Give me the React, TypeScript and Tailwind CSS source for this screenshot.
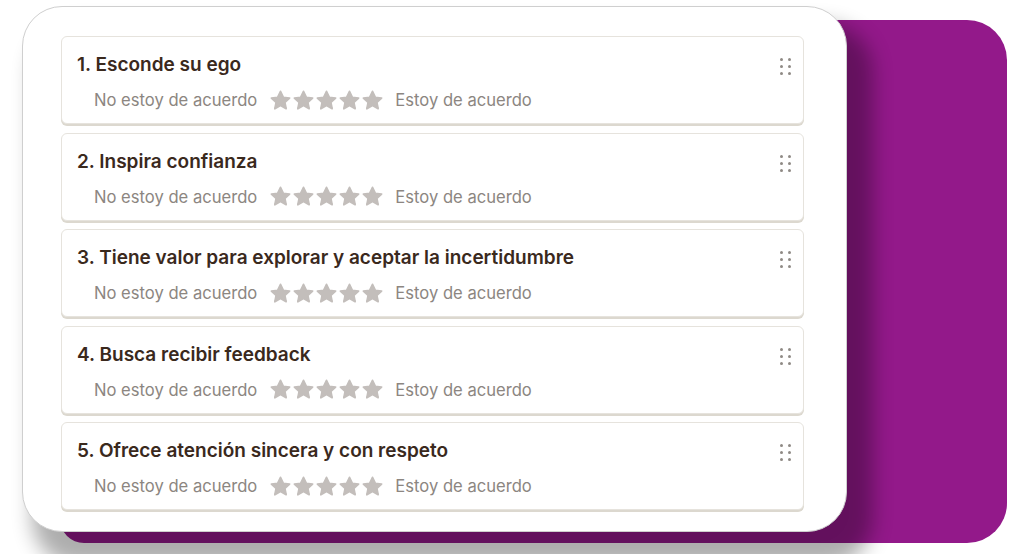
const questions = [
  "1. Esconde su ego",
  "2. Inspira confianza",
  "3. Tiene valor para explorar y aceptar la incertidumbre",
  "4. Busca recibir feedback",
  "5. Ofrece atención sincera y con respeto",
]

function Star() {
  return (
    <svg width="23" height="23" viewBox="0 0 24 24" className="shrink-0">
      <path
        d="M12 2.5l2.9 6.1 6.6.8-4.9 4.6 1.3 6.6L12 17.3l-5.9 3.3 1.3-6.6-4.9-4.6 6.6-.8z"
        fill="#c3bebb"
        stroke="#c3bebb"
        strokeWidth="1.8"
        strokeLinejoin="round"
      />
    </svg>
  )
}

function Grip() {
  return (
    <div className="grid grid-cols-2 gap-x-[5px] gap-y-[4px]">
      {Array.from({ length: 6 }).map((_, i) => (
        <span key={i} className="h-[3px] w-[3px] rounded-full bg-[#8f8a85]" />
      ))}
    </div>
  )
}

function QuestionRow({ title }: { title: string }) {
  return (
    <div className="relative h-[88px] rounded-md border border-[#e6e3dd] shadow-[0_2px_0_#dcd8cf] bg-white pl-[15px] pt-[16px]">
      <div className="text-[19px] leading-6 font-semibold text-[#3a291d]">{title}</div>
      <div className="mt-[11px] flex items-center pl-[17px] text-[16.6px] leading-6 text-[#8c8681]">
        <span>No estoy de acuerdo</span>
        <div className="ml-[12px] mr-[11px] flex gap-0">
          <Star />
          <Star />
          <Star />
          <Star />
          <Star />
        </div>
        <span>Estoy de acuerdo</span>
      </div>
      {/* drag handle */}
      <div className="absolute right-[12px] top-[21px]">
        <Grip />
      </div>
    </div>
  )
}

export default function App() {
  return (
    <div
      className="grid h-[554px] w-[1024px] overflow-hidden bg-white"
      style={{ fontFamily: "Inter, 'Noto Sans', sans-serif" }}
    >
      {/* purple backdrop */}
      <div className="col-start-1 row-start-1 ml-[60px] mt-[20px] h-[523px] w-[947px] self-start justify-self-start rounded-[40px] rounded-bl-[24px] bg-[#93198a]" />

      {/* white card */}
      <div className="z-10 col-start-1 row-start-1 ml-[22px] mt-[6px] flex h-[526px] w-[825px] flex-col gap-[8.5px] self-start justify-self-start rounded-[40px] border border-[#cfcfcf] bg-white pl-[38px] pr-[42px] pt-[29px] shadow-[18px_26px_20px_8px_rgba(0,0,0,0.32)]">
        {questions.map((q) => (
          <QuestionRow key={q} title={q} />
        ))}
      </div>
    </div>
  )
}
